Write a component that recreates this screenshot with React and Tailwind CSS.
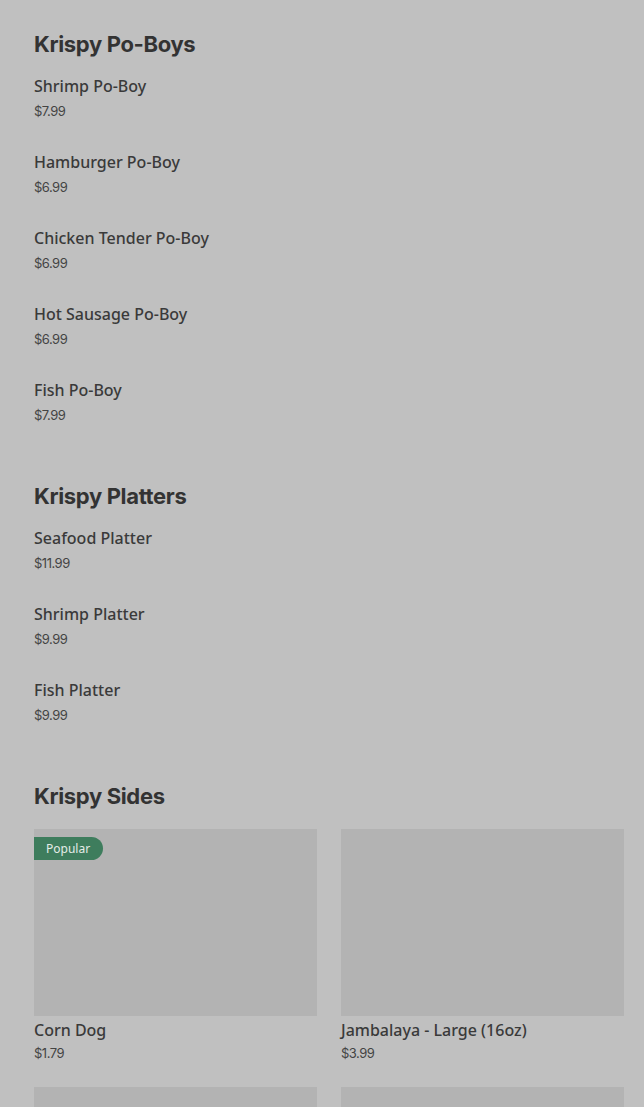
const poBoys = [
  { name: 'Shrimp Po-Boy', price: '$7.99' },
  { name: 'Hamburger Po-Boy', price: '$6.99' },
  { name: 'Chicken Tender Po-Boy', price: '$6.99' },
  { name: 'Hot Sausage Po-Boy', price: '$6.99' },
  { name: 'Fish Po-Boy', price: '$7.99' },
];

const platters = [
  { name: 'Seafood Platter', price: '$11.99' },
  { name: 'Shrimp Platter', price: '$9.99' },
  { name: 'Fish Platter', price: '$9.99' },
];

// second row only shows the top of its images in the frame
const sides = [
  { name: 'Corn Dog', price: '$1.79', popular: true },
  { name: 'Jambalaya - Large (16oz)', price: '$3.99' },
  { id: 'side-3' },
  { id: 'side-4' },
];

const Heading = ({ children }) => (
  <h2 className="font-['Inter',sans-serif] text-[22px] leading-7 font-bold tracking-[-0.35px] text-[#333]">{children}</h2>
);

const ListItem = ({ item }) => (
  <div className="h-[76px] pt-[10px]">
    <div className="text-[16px] leading-6 text-[#3a3a3a] font-['Noto_Sans',sans-serif] font-medium">{item.name}</div>
    <div className="mt-[4px] text-[13px] leading-[18px] text-[#444] font-['Inter',sans-serif] tracking-[-0.5px]">{item.price}</div>
  </div>
);

const SideCard = ({ item }) => (
  <div className="h-[258px]">
    <div className="relative h-[187px] bg-[#b3b3b3]">
      {item.popular && (
        <span className="absolute left-0 top-[8px] h-[23px] pl-[12px] pr-[13px] flex items-center rounded-r-full bg-[#3e7d5d] text-[12px] text-[#e4ece7] font-['Noto_Sans',sans-serif]">
          Popular
        </span>
      )}
    </div>
    {item.name && (
      <>
        <div className="pt-[2px] text-[16px] leading-6 text-[#3a3a3a] font-['Noto_Sans',sans-serif] font-medium">{item.name}</div>
        <div className="pt-[2px] text-[13px] leading-[18px] text-[#444] font-['Inter',sans-serif] tracking-[-0.5px]">{item.price}</div>
      </>
    )}
  </div>
);

export default function App() {
  return (
    <div className="h-[1107px] bg-[#c0c0c0] pl-[34px] pr-[20px] pt-[30px] overflow-hidden">
      <section>
        <Heading>Krispy Po-Boys</Heading>
        <div className="mt-[6px]">
          {poBoys.map((it) => <ListItem key={it.name} item={it} />)}
        </div>
      </section>
      <section className="mt-[38px]">
        <Heading>Krispy Platters</Heading>
        <div className="mt-[6px]">
          {platters.map((it) => <ListItem key={it.name} item={it} />)}
        </div>
      </section>
      <section className="mt-[38px]">
        <Heading>Krispy Sides</Heading>
        <div className="mt-[19px] grid grid-cols-2 gap-x-[24px]">
          {sides.map((it) => <SideCard key={it.name || it.id} item={it} />)}
        </div>
      </section>
    </div>
  );
}
